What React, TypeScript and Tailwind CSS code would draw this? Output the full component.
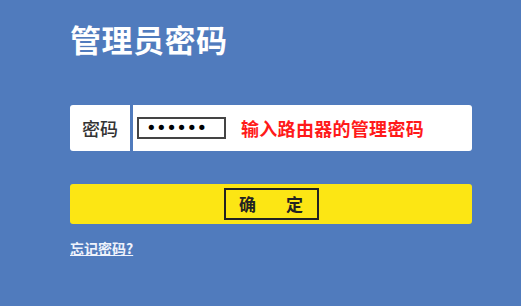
import React from 'react';

const App: React.FC = () => {
  return (
    <div
      className="w-[521px] h-[306px] bg-[#507bbd] overflow-hidden"
      style={{ fontFamily: '"Noto Sans CJK SC", "Liberation Sans", sans-serif' }}
    >
      <div className="pl-[70px] pr-[49px] pt-[18px]">
        <h1 className="text-[31px] leading-[42px] font-bold text-white tracking-[0.5px]">管理员密码</h1>

        <div className="mt-[45px] flex h-[46px] gap-[3px]">
          <div className="w-[60px] bg-white rounded-l-[3px] flex items-center justify-center text-[18px] font-medium text-[#333]">
            密码
          </div>
          <div className="flex-1 bg-white rounded-r-[3px] flex items-center pl-[4px]">
            <div
              className="w-[89px] h-[22px] border-2 border-[#444] flex items-center pl-[7px] text-[18px] tracking-[-0.5px] text-black leading-none"
              style={{ fontFamily: '"DejaVu Sans", sans-serif' }}
            >
              ••••••
            </div>
            <span className="ml-[15px] text-[18px] font-bold text-[#ff1a1a] tracking-[0.3px]">输入路由器的管理密码</span>
          </div>
        </div>

        <div className="mt-[33px] h-[40px] bg-[#fce614] rounded-[3px] flex items-center justify-center">
          <div className="w-[95px] h-[32px] border-2 border-[#222] flex items-center justify-center gap-[30px] text-[17px] font-bold text-[#222]">
            <span>确</span>
            <span>定</span>
          </div>
        </div>

        <a href="#" className="mt-[15px] inline-block text-[14px] leading-[18px] font-bold text-[#eef2fb] underline">
          忘记密码?
        </a>
      </div>
    </div>
  );
};

export default App;
